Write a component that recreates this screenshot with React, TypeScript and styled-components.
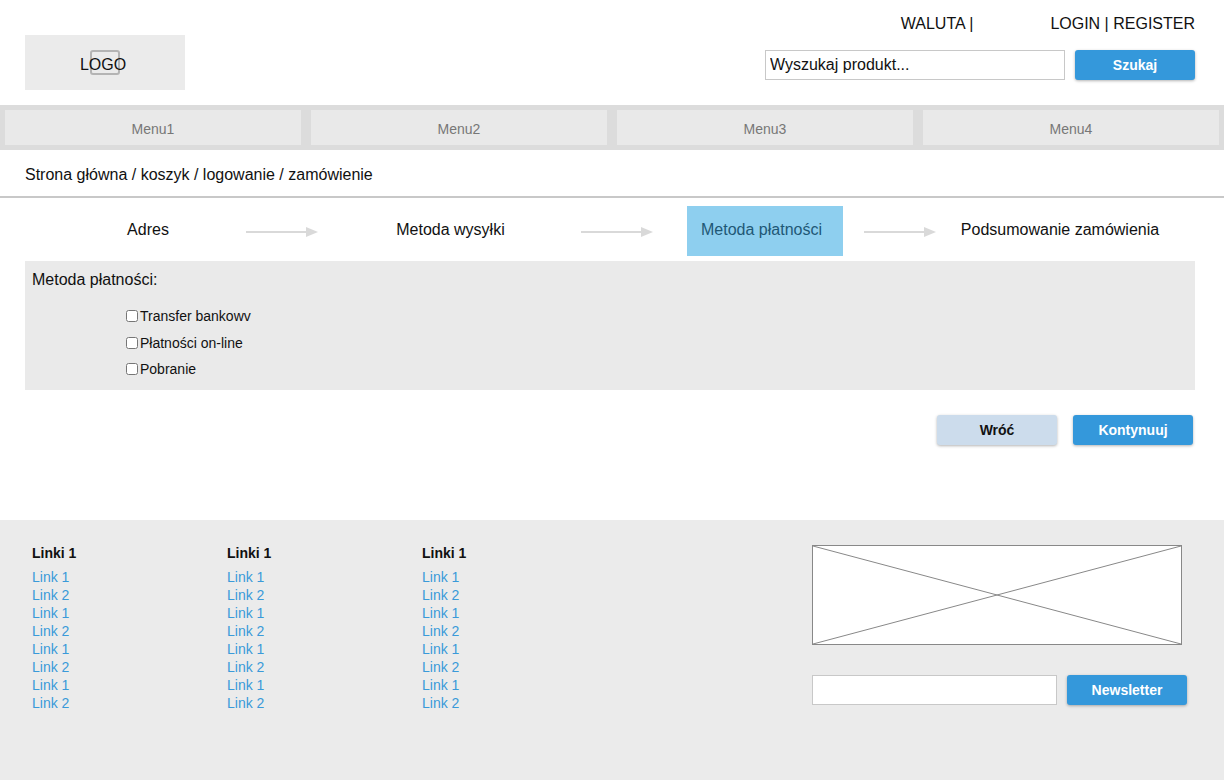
import styled, { createGlobalStyle } from 'styled-components'

const GlobalStyle = createGlobalStyle`
  html, body {
    margin: 0;
    padding: 0;
    background: #ffffff;
    font-family: 'Liberation Sans', Arial, sans-serif;
    color: #111;
  }
  * {
    box-sizing: border-box;
  }
`

const Page = styled.div`
  width: 1224px;
  min-height: 780px;
  display: flex;
  flex-direction: column;
`

const Header = styled.header`
  height: 105px;
  display: flex;
  justify-content: space-between;
  padding: 0 29px 0 25px;
`

const LogoBox = styled.div`
  position: relative;
  margin-top: 35px;
  width: 160px;
  height: 55px;
  background: #ebebeb;
  display: flex;
  align-items: center;
  justify-content: center;
`

const LogoIcon = styled.svg`
  position: absolute;
  left: 65px;
  top: 15px;
`

const LogoText = styled.span`
  position: relative;
  font-size: 16px;
  color: #111;
  margin-top: 5px;
  margin-left: -4px;
`

const HeaderRight = styled.div`
  display: flex;
  flex-direction: column;
  align-items: flex-end;
`

const TopLinks = styled.div`
  display: flex;
  gap: 77px;
  margin-top: 15px;
  font-size: 16px;
  line-height: 18px;
`

const SearchRow = styled.div`
  display: flex;
  gap: 10px;
  margin-top: 17px;
`

const TextInput = styled.input<{ $width: number }>`
  width: ${(p) => p.$width}px;
  height: 30px;
  border: 1px solid #c8c8c8;
  background: #fff;
  padding: 0 4px;
  font-family: 'Liberation Sans', Arial, sans-serif;
  font-size: 16px;
  color: #111;
  outline: none;
  &::placeholder {
    color: #111;
  }
`

const Button = styled.button<{ $variant?: 'primary' | 'light' }>`
  width: 120px;
  height: 30px;
  border: none;
  border-radius: 3px;
  background: ${(p) => (p.$variant === 'light' ? '#ccdcec' : '#3498db')};
  color: ${(p) => (p.$variant === 'light' ? '#111' : '#fff')};
  font-family: 'Liberation Sans', Arial, sans-serif;
  font-size: 14px;
  font-weight: 700;
  box-shadow: 0 1px 3px rgba(0, 0, 0, 0.3);
  cursor: pointer;
`

const NavBar = styled.nav`
  height: 45px;
  background: #dcdcdc;
  display: grid;
  grid-template-columns: repeat(4, 296px);
  gap: 10px;
  padding: 5px;
`

const NavItem = styled.div`
  background: #e9e9e9;
  display: flex;
  align-items: center;
  justify-content: center;
  padding-top: 2px;
  color: #777;
  font-size: 14px;
`

const Breadcrumb = styled.div`
  height: 48px;
  padding: 16px 25px 0;
  font-size: 16px;
  border-bottom: 2px solid #c8c8c8;
`

const Steps = styled.div`
  height: 63px;
  display: grid;
  grid-template-columns: 198px 72px 263px 72px 211px 72px 246px;
  align-items: start;
  padding: 8px 0 0 48px;
`

const Step = styled.div`
  height: 50px;
  display: flex;
  align-items: center;
  justify-content: center;
  padding: 0 0 2px 2px;
  font-size: 16px;
`

const ActiveStep = styled.div`
  margin-left: 34px;
  width: 156px;
  height: 50px;
  background: #8ecfef;
  color: #1f5876;
  display: flex;
  align-items: center;
  justify-content: center;
  padding: 0 7px 2px 0;
  font-size: 16px;
`

const ArrowCell = styled.div`
  height: 50px;
  display: flex;
  align-items: center;
  padding-top: 1px;
`

const Panel = styled.section`
  margin: 0 29px 0 25px;
  height: 129px;
  background: #eaeaea;
  padding: 9px 7px;
`

const PanelTitle = styled.div`
  font-size: 16px;
  line-height: 20px;
`

const OptionList = styled.div`
  display: flex;
  flex-direction: column;
  gap: 10.5px;
  margin-top: 18px;
  padding-left: 94px;
`

const Option = styled.label`
  display: flex;
  align-items: center;
  font-size: 14px;
  line-height: 16px;
  input {
    width: 12px;
    height: 12px;
    margin: 0 2px 0 0;
  }
`

const Actions = styled.div`
  display: flex;
  justify-content: flex-end;
  gap: 16px;
  padding: 25px 31px 0 0;
  height: 130px;
`

const Footer = styled.footer`
  height: 260px;
  background: #ebebeb;
  display: flex;
  padding: 25px 37px 0 32px;
`

const LinkColumns = styled.div`
  display: grid;
  grid-template-columns: repeat(3, 195px);
  flex: 1;
`

const LinkColumn = styled.div`
  display: flex;
  flex-direction: column;
`

const ColumnTitle = styled.div`
  font-size: 14px;
  font-weight: 700;
  line-height: 16px;
  margin-bottom: 7px;
`

const FooterLink = styled.a`
  color: #3a9ad9;
  font-size: 14px;
  line-height: 18px;
  text-decoration: none;
`

const FooterRight = styled.div`
  display: flex;
  flex-direction: column;
  gap: 30px;
  width: 375px;
`

const Placeholder = styled.svg`
  display: block;
  border: 1px solid #888;
  background: #fff;
`

const NewsletterRow = styled.div`
  display: flex;
  gap: 10px;
`

const menus = ['Menu1', 'Menu2', 'Menu3', 'Menu4']
const links = ['Link 1', 'Link 2', 'Link 1', 'Link 2', 'Link 1', 'Link 2', 'Link 1', 'Link 2']
const payments = ['Transfer bankowv', 'Płatności on-line', 'Pobranie']

function StepArrow() {
  return (
    <ArrowCell>
      <svg width="72" height="12" viewBox="0 0 72 12">
        <line x1="0" y1="6" x2="60" y2="6" stroke="#d9d9d9" strokeWidth="2" />
        <polygon points="60,1 72,6 60,11" fill="#d9d9d9" />
      </svg>
    </ArrowCell>
  )
}

export default function App() {
  return (
    <Page>
      <GlobalStyle />
      <Header>
        <LogoBox>
          <LogoIcon width="30" height="25" viewBox="0 0 30 25">
            <rect x="1" y="1" width="28" height="23" rx="2" fill="none" stroke="#b4b4b4" strokeWidth="2" />
          </LogoIcon>
          <LogoText>LOGO</LogoText>
        </LogoBox>
        <HeaderRight>
          <TopLinks>
            <span>WALUTA |</span>
            <span>LOGIN | REGISTER</span>
          </TopLinks>
          <SearchRow>
            <TextInput $width={300} placeholder="Wyszukaj produkt..." />
            <Button>Szukaj</Button>
          </SearchRow>
        </HeaderRight>
      </Header>

      <NavBar>
        {menus.map((m) => (
          <NavItem key={m}>{m}</NavItem>
        ))}
      </NavBar>

      <Breadcrumb>Strona główna / koszyk / logowanie / zamówienie</Breadcrumb>

      <Steps>
        <Step>Adres</Step>
        <StepArrow />
        <Step>Metoda wysyłki</Step>
        <StepArrow />
        <ActiveStep>Metoda płatności</ActiveStep>
        <StepArrow />
        <Step>Podsumowanie zamówienia</Step>
      </Steps>

      <Panel>
        <PanelTitle>Metoda płatności:</PanelTitle>
        <OptionList>
          {payments.map((p) => (
            <Option key={p}>
              <input type="checkbox" />
              {p}
            </Option>
          ))}
        </OptionList>
      </Panel>

      <Actions>
        <Button $variant="light">Wróć</Button>
        <Button>Kontynuuj</Button>
      </Actions>

      <Footer>
        <LinkColumns>
          {[0, 1, 2].map((c) => (
            <LinkColumn key={c}>
              <ColumnTitle>Linki 1</ColumnTitle>
              {links.map((l, i) => (
                <FooterLink key={i} href="#">
                  {l}
                </FooterLink>
              ))}
            </LinkColumn>
          ))}
        </LinkColumns>
        <FooterRight>
          <Placeholder width="370" height="100" viewBox="0 0 368 98" preserveAspectRatio="none">
            <line x1="0" y1="0" x2="368" y2="98" stroke="#888" strokeWidth="1" />
            <line x1="368" y1="0" x2="0" y2="98" stroke="#888" strokeWidth="1" />
          </Placeholder>
          <NewsletterRow>
            <TextInput $width={245} />
            <Button>Newsletter</Button>
          </NewsletterRow>
        </FooterRight>
      </Footer>
    </Page>
  )
}
